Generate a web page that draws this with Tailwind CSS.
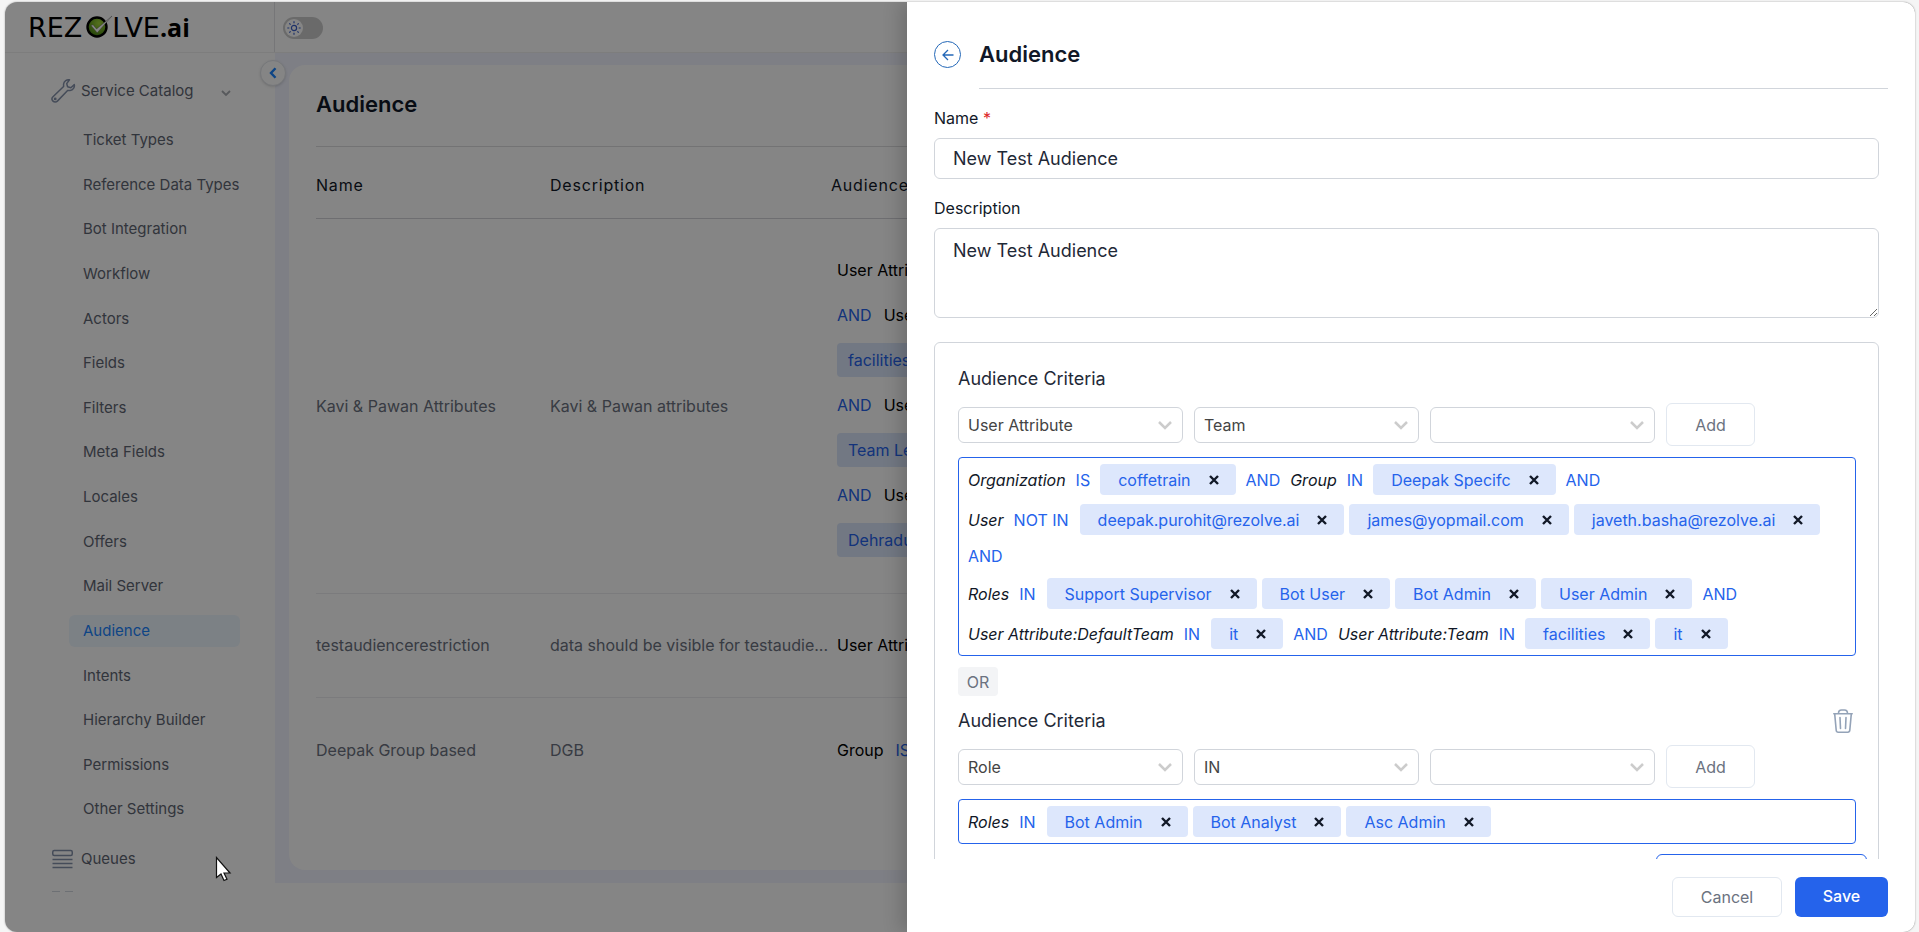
<!DOCTYPE html>
<html lang="en">
<head>
<meta charset="utf-8">
<title>Audience</title>
<script src="https://cdn.jsdelivr.net/npm/@tailwindcss/browser@4"></script>
</head>
<body class="h-screen overflow-hidden bg-[#f5f5f5] pt-[2px] pr-1 pl-[5px] font-['Inter','Liberation_Sans',sans-serif] text-base text-[#111827]">
<svg class="hidden" aria-hidden="true">
  <symbol id="x" viewBox="0 0 10 10"><path d="M1 1l8 8M9 1L1 9" stroke="currentColor" stroke-width="2.400"/></symbol>
  <symbol id="caret" viewBox="0 0 14 9"><path d="M1 1l6 6 6-6" fill="none" stroke="#ccc" stroke-width="2.500"/></symbol>
</svg>
<div class="relative h-full overflow-hidden rounded-xl bg-white shadow-[0_0_2px_rgba(0,0,0,0.35)]">

  <!-- Page behind the drawer -->
  <div class="flex h-full flex-col">
    <header class="flex h-[51px] shrink-0 border-b border-[#f0f0f0]">
      <a href="#" aria-label="REZOLVE.ai" class="flex w-[270px] shrink-0 items-center border-r border-[#e2e2e6] pl-[23px] text-black no-underline">
        <span class="flex items-center font-['DejaVu_Sans',sans-serif] text-[27px] leading-none">REZ<svg width="26" height="24" viewBox="0 0 26 24" class="mb-0.5 ml-1 overflow-visible" aria-hidden="true">
            <defs><radialGradient id="ball" cx="0.6" cy="0.3" r="0.8"><stop offset="0" stop-color="#a4d83a"/><stop offset="1" stop-color="#3c7a10"/></radialGradient></defs>
            <circle cx="11" cy="13" r="9.500" fill="url(#ball)" stroke="#000" stroke-width="2.400"/>
            <path d="M5 11.500l2-.8 3.600 4.300L26 2 11.200 18.800z" fill="#fff" stroke="#555" stroke-width=".4"/>
          </svg>LVE</span>
        <span class="font-['Open_Sans',sans-serif] text-[25px] leading-none font-bold">.ai</span>
      </a>
      <div class="flex items-center pt-px pl-2">
        <label class="flex h-[22px] w-10 items-center rounded-full bg-[#ccc] px-0.5">
          <input type="checkbox" class="sr-only" aria-label="Dark mode">
          <span class="flex size-[18px] items-center justify-center rounded-full bg-white">
            <svg width="14" height="14" viewBox="0 0 14 14" fill="none" stroke="#3b5fc9" stroke-width="1.200" aria-hidden="true"><circle cx="7" cy="7" r="2.600"/><path d="M7 .3v2M7 11.700v2M.3 7h2M11.700 7h2M2.300 2.300l1.300 1.300M10.400 10.400l1.300 1.300M2.300 11.700l1.300-1.300M10.400 3.600l1.300-1.300"/></svg>
          </span>
        </label>
      </div>
    </header>

    <div class="flex min-h-0 flex-1">
      <nav class="flex w-[270px] shrink-0 flex-col text-[15px] text-[#5f6673]">
        <button type="button" class="mt-[26px] flex h-6 items-center pl-[45px]">
          <svg width="26" height="26" viewBox="0 0 26 26" fill="none" stroke="#8592ab" stroke-width="1.500" stroke-linejoin="round" aria-hidden="true"><path d="M19.500 1.800c-2.600-.6-5.600 1.200-5.900 4.200-.1 1 .1 1.900 0 2.500L3 18.700a3.100 3.100 0 0 0 4.400 4.400L17.600 12.500c.7-.2 1.500.1 2.500 0 3-.3 4.800-3.300 4.200-5.900l-3.400 3.100-3.300-.9-.9-3.200z"/><circle cx="5.200" cy="20.900" r=".7"/></svg>
          <span class="ml-[5px]">Service Catalog</span>
          <svg class="mt-1 ml-7" width="10" height="7" viewBox="0 0 10 7" fill="none" stroke="#a8abb0" stroke-width="1.800" aria-hidden="true"><path d="M1 1l4 4 4-4"/></svg>
        </button>
        <ul class="mt-[15px] flex h-[714px] shrink-0 flex-col pr-[35px] pl-16">
          <li class="flex flex-1 items-center"><a href="#" class="w-full rounded-md px-3.5 py-1">Ticket Types</a></li>
          <li class="flex flex-1 items-center"><a href="#" class="w-full rounded-md px-3.5 py-1 whitespace-nowrap">Reference Data Types</a></li>
          <li class="flex flex-1 items-center"><a href="#" class="w-full rounded-md px-3.5 py-1">Bot Integration</a></li>
          <li class="flex flex-1 items-center"><a href="#" class="w-full rounded-md px-3.5 py-1">Workflow</a></li>
          <li class="flex flex-1 items-center"><a href="#" class="w-full rounded-md px-3.5 py-1">Actors</a></li>
          <li class="flex flex-1 items-center"><a href="#" class="w-full rounded-md px-3.5 py-1">Fields</a></li>
          <li class="flex flex-1 items-center"><a href="#" class="w-full rounded-md px-3.5 py-1">Filters</a></li>
          <li class="flex flex-1 items-center"><a href="#" class="w-full rounded-md px-3.5 py-1">Meta Fields</a></li>
          <li class="flex flex-1 items-center"><a href="#" class="w-full rounded-md px-3.5 py-1">Locales</a></li>
          <li class="flex flex-1 items-center"><a href="#" class="w-full rounded-md px-3.5 py-1">Offers</a></li>
          <li class="flex flex-1 items-center"><a href="#" class="w-full rounded-md px-3.5 py-1">Mail Server</a></li>
          <li class="flex flex-1 items-center"><a href="#" aria-current="page" class="w-full rounded-md bg-[#edf7ff] px-3.5 py-[5px] text-[#1b84ff]">Audience</a></li>
          <li class="flex flex-1 items-center"><a href="#" class="w-full rounded-md px-3.5 py-1">Intents</a></li>
          <li class="flex flex-1 items-center"><a href="#" class="w-full rounded-md px-3.5 py-1">Hierarchy Builder</a></li>
          <li class="flex flex-1 items-center"><a href="#" class="w-full rounded-md px-3.5 py-1">Permissions</a></li>
          <li class="flex flex-1 items-center"><a href="#" class="w-full rounded-md px-3.5 py-1">Other Settings</a></li>
        </ul>
        <button type="button" class="mt-[15px] flex h-6 items-center pl-[47px]">
          <svg width="21" height="20" viewBox="0 0 21 20" fill="none" stroke="#8592ab" stroke-width="1.500" aria-hidden="true"><rect x=".75" y="1.500" width="19.500" height="5" rx="1.500"/><path d="M.5 10.500h20M.5 14.500h20M.5 18.500h20"/></svg>
          <span class="ml-2">Queues</span>
        </button>
        <div class="mt-5 flex gap-[5px] pl-[47px]"><span class="h-px w-2 bg-[#d2d6de]"></span><span class="h-px w-2 bg-[#d2d6de]"></span></div>
      </nav>

      <main class="mb-[49px] min-w-0 flex-1 bg-[#f1f3ff] pt-3 pr-3.5 pb-[13px] pl-3.5">
        <section class="h-full rounded-2xl bg-white px-[27px] pt-5">
          <h1 class="flex h-[62px] items-center border-b border-[#dcdcdf] pb-[22px] text-[22px] font-semibold">Audience</h1>
          <table class="w-full table-fixed text-left">
            <colgroup><col class="w-[234px]"><col class="w-[281px]"><col></colgroup>
            <thead><tr class="h-[71px] border-b border-[#d4d4d8] tracking-wider">
              <th class="pt-1.5 font-normal" scope="col">Name</th><th class="pt-1.5 font-normal" scope="col">Description</th><th class="pt-1.5 font-normal" scope="col">Audience Criteria</th>
            </tr></thead>
            <tbody>
              <tr class="h-[375px] border-b border-[#ececf0]">
                <td class="text-[#6b7280]">Kavi &amp; Pawan Attributes</td>
                <td class="text-[#6b7280]">Kavi &amp; Pawan attributes</td>
                <td class="pb-0.5 pl-1.5">
                  <div class="flex flex-col items-start gap-[11px] whitespace-nowrap text-black">
                    <p class="flex h-[34px] items-center gap-3">User Attribute:Team <span class="text-[#2563eb]">IN</span></p>
                    <p class="flex h-[34px] items-center gap-3"><span class="text-[#2563eb]">AND</span>User Attribute:Team</p>
                    <span class="flex h-[34px] items-center rounded bg-[#dbe6fb] px-[11px] text-[#2563eb]">facilities</span>
                    <p class="flex h-[34px] items-center gap-3"><span class="text-[#2563eb]">AND</span>User Attribute:Role</p>
                    <span class="flex h-[34px] items-center rounded bg-[#dbe6fb] px-[11px] text-[#2563eb]">Team Lead</span>
                    <p class="flex h-[34px] items-center gap-3"><span class="text-[#2563eb]">AND</span>User Attribute:City</p>
                    <span class="flex h-[34px] items-center rounded bg-[#dbe6fb] px-[11px] text-[#2563eb]">Dehradun</span>
                  </div>
                </td>
              </tr>
              <tr class="h-[104px] border-b border-[#ececf0]">
                <td class="text-[#6b7280]">testaudiencerestriction</td>
                <td class="whitespace-nowrap text-[#6b7280]">data should be visible for testaudie...</td>
                <td class="pl-1.5 whitespace-nowrap text-black">User Attribute:Team</td>
              </tr>
              <tr class="h-[106px]">
                <td class="text-[#6b7280]">Deepak Group based</td>
                <td class="text-[#6b7280]">DGB</td>
                <td class="pl-1.5 whitespace-nowrap text-black"><span class="flex gap-3">Group <span class="text-[#2563eb]">IS</span></span></td>
              </tr>
            </tbody>
          </table>
        </section>
      </main>
    </div>
  </div>

  <button type="button" aria-label="Collapse menu" class="absolute top-[58px] left-[255px] flex size-[26px] items-center justify-center rounded-full border border-[#e2e5ea] bg-white shadow">
    <svg width="8" height="12" viewBox="0 0 8 12" fill="none" stroke="#1b84ff" stroke-width="2.400" aria-hidden="true"><path d="M6.500 1.200L2 6l4.500 4.800"/></svg>
  </button>

  <div class="absolute inset-0 bg-black/48"></div>

  <!-- Drawer -->
  <aside class="absolute inset-y-0 right-0 left-[902px] flex flex-col bg-white shadow-[-8px_0_16px_rgba(0,0,0,0.15)]">
    <header class="flex shrink-0 gap-[18px] pt-[39px] pr-[27px] pl-[27px]">
      <button type="button" aria-label="Back" class="flex size-[27px] items-center justify-center rounded-full border border-[#2468b8]">
        <svg width="12" height="12" viewBox="0 0 12 12" fill="none" stroke="#2468b8" stroke-width="1.300" aria-hidden="true"><path d="M11.500 6H1M6 1L1 6l5 5"/></svg>
      </button>
      <h2 class="h-12 flex-1 border-b border-[#d1d5db] text-[22px] leading-[27px] font-semibold">Audience</h2>
    </header>

    <form class="min-h-0 flex-1 overflow-hidden pt-[17px] pr-9 pl-[27px]">
      <label for="name" class="block h-8 leading-6">Name <span class="text-[#dc2626]">*</span></label>
      <input id="name" type="text" value="New Test Audience" class="block h-[41px] w-full rounded-md border border-[#d1d5db] px-[18px] text-[18px] text-[#1f2937]">
      <label for="desc" class="mt-[17px] block h-8 leading-6">Description</label>
      <textarea id="desc" class="block h-[90px] w-full resize rounded-md border border-[#d1d5db] px-[18px] py-2 text-[18px] leading-[27px] text-[#1f2937]">New Test Audience</textarea>

      <div class="mt-6 flex flex-col rounded-md border border-[#d1d5db] pr-[22px] pb-6 pl-[23px]">
        <section>
          <h3 class="mt-[21px] text-[18px] leading-[30px] text-[#1f2937]">Audience Criteria</h3>
          <div class="mt-[9px] flex items-center gap-[11px]">
            <div class="relative"><select aria-label="Criteria type" class="block h-9 w-[225px] appearance-none rounded-md border border-[#d1d5db] bg-white px-[9px] text-[#444]"><option>User Attribute</option></select><svg class="pointer-events-none absolute top-[14px] right-[11px]" width="14" height="9"><use href="#caret"/></svg></div>
            <div class="relative"><select aria-label="Attribute" class="block h-9 w-[225px] appearance-none rounded-md border border-[#d1d5db] bg-white px-[9px] text-[#444]"><option>Team</option></select><svg class="pointer-events-none absolute top-[14px] right-[11px]" width="14" height="9"><use href="#caret"/></svg></div>
            <div class="relative"><select aria-label="Value" class="block h-9 w-[225px] appearance-none rounded-md border border-[#d1d5db] bg-white px-[9px] text-[#444]"><option></option></select><svg class="pointer-events-none absolute top-[14px] right-[11px]" width="14" height="9"><use href="#caret"/></svg></div>
            <button type="button" class="h-[43px] w-[89px] rounded-md border border-[#e2e8f0] text-[#6b7280]">Add</button>
          </div>
          <div class="mt-[11px] flex flex-col gap-[9px] rounded border border-[#2563eb] py-1.5 pl-[9px] whitespace-nowrap text-[#2563eb]">
            <div class="flex items-center gap-2.5"><i class="text-[#111827]">Organization</i> IS
              <span class="flex h-[31px] items-center gap-[18px] rounded bg-[#dde7fc] pr-[17px] pl-[18px]">coffetrain<button type="button" aria-label="Remove coffetrain" class="text-[#111827]"><svg width="10" height="10"><use href="#x"/></svg></button></span>
              AND <i class="text-[#111827]">Group</i> IN
              <span class="flex h-[31px] items-center gap-[18px] rounded bg-[#dde7fc] pr-[17px] pl-[18px]">Deepak Specifc<button type="button" aria-label="Remove Deepak Specifc" class="text-[#111827]"><svg width="10" height="10"><use href="#x"/></svg></button></span>
              AND
            </div>
            <div class="flex items-center gap-2.5"><i class="text-[#111827]">User</i> NOT IN
              <div class="ml-px flex gap-[5px]">
                <span class="flex h-[31px] items-center gap-[18px] rounded bg-[#dde7fc] pr-[17px] pl-[18px]">deepak.purohit@rezolve.ai<button type="button" aria-label="Remove deepak.purohit@rezolve.ai" class="text-[#111827]"><svg width="10" height="10"><use href="#x"/></svg></button></span>
                <span class="flex h-[31px] items-center gap-[18px] rounded bg-[#dde7fc] pr-[17px] pl-[18px]">james@yopmail.com<button type="button" aria-label="Remove james@yopmail.com" class="text-[#111827]"><svg width="10" height="10"><use href="#x"/></svg></button></span>
                <span class="flex h-[31px] items-center gap-[18px] rounded bg-[#dde7fc] pr-[17px] pl-[18px]">javeth.basha@rezolve.ai<button type="button" aria-label="Remove javeth.basha@rezolve.ai" class="text-[#111827]"><svg width="10" height="10"><use href="#x"/></svg></button></span>
              </div>
            </div>
            <div class="h-[25px]">AND</div>
            <div class="flex items-center gap-2.5"><i class="text-[#111827]">Roles</i> IN
              <div class="ml-px flex gap-[5px]">
                <span class="flex h-[31px] items-center gap-[18px] rounded bg-[#dde7fc] pr-[17px] pl-[18px]">Support Supervisor<button type="button" aria-label="Remove Support Supervisor" class="text-[#111827]"><svg width="10" height="10"><use href="#x"/></svg></button></span>
                <span class="flex h-[31px] items-center gap-[18px] rounded bg-[#dde7fc] pr-[17px] pl-[18px]">Bot User<button type="button" aria-label="Remove Bot User" class="text-[#111827]"><svg width="10" height="10"><use href="#x"/></svg></button></span>
                <span class="flex h-[31px] items-center gap-[18px] rounded bg-[#dde7fc] pr-[17px] pl-[18px]">Bot Admin<button type="button" aria-label="Remove Bot Admin" class="text-[#111827]"><svg width="10" height="10"><use href="#x"/></svg></button></span>
                <span class="flex h-[31px] items-center gap-[18px] rounded bg-[#dde7fc] pr-[17px] pl-[18px]">User Admin<button type="button" aria-label="Remove User Admin" class="text-[#111827]"><svg width="10" height="10"><use href="#x"/></svg></button></span>
              </div>
              AND
            </div>
            <div class="flex items-center gap-2.5"><i class="text-[#111827]">User Attribute:DefaultTeam</i> IN
              <span class="ml-px flex h-[31px] items-center gap-[18px] rounded bg-[#dde7fc] pr-[17px] pl-[18px]">it<button type="button" aria-label="Remove it" class="text-[#111827]"><svg width="10" height="10"><use href="#x"/></svg></button></span>
              AND <i class="text-[#111827]">User Attribute:Team</i> IN
              <div class="flex gap-[5px]">
                <span class="flex h-[31px] items-center gap-[18px] rounded bg-[#dde7fc] pr-[17px] pl-[18px]">facilities<button type="button" aria-label="Remove facilities" class="text-[#111827]"><svg width="10" height="10"><use href="#x"/></svg></button></span>
                <span class="flex h-[31px] items-center gap-[18px] rounded bg-[#dde7fc] pr-[17px] pl-[18px]">it<button type="button" aria-label="Remove it" class="text-[#111827]"><svg width="10" height="10"><use href="#x"/></svg></button></span>
              </div>
            </div>
          </div>
        </section>

        <div class="mt-[11px] flex h-[29px] w-10 items-center justify-center rounded bg-[#f3f4f6] text-[#6b7280]">OR</div>

        <section class="mt-2.5">
          <div class="flex items-center justify-between pr-[3px]">
            <h3 class="text-[18px] leading-[30px] text-[#1f2937]">Audience Criteria</h3>
            <button type="button" aria-label="Delete criteria"><svg width="20" height="24" viewBox="0 0 20 24" fill="none" stroke="#94a3b8" stroke-width="1.600" stroke-linecap="round" stroke-linejoin="round" aria-hidden="true"><path d="M.8 4.700h18.400M1.700 4.900l1.500 16.300q.2 2 2 2h9.600q1.800 0 2-2l1.500-16.300M5.500 4.500q0-3.500 3-3.500h3q3 0 3 3.500M7 8.500l.5 11M13 8.500l-.5 11"/></svg></button>
          </div>
          <div class="mt-[9px] flex items-center gap-[11px]">
            <div class="relative"><select aria-label="Criteria type" class="block h-9 w-[225px] appearance-none rounded-md border border-[#d1d5db] bg-white px-[9px] text-[#444]"><option>Role</option></select><svg class="pointer-events-none absolute top-[14px] right-[11px]" width="14" height="9"><use href="#caret"/></svg></div>
            <div class="relative"><select aria-label="Operator" class="block h-9 w-[225px] appearance-none rounded-md border border-[#d1d5db] bg-white px-[9px] text-[#444]"><option>IN</option></select><svg class="pointer-events-none absolute top-[14px] right-[11px]" width="14" height="9"><use href="#caret"/></svg></div>
            <div class="relative"><select aria-label="Value" class="block h-9 w-[225px] appearance-none rounded-md border border-[#d1d5db] bg-white px-[9px] text-[#444]"><option></option></select><svg class="pointer-events-none absolute top-[14px] right-[11px]" width="14" height="9"><use href="#caret"/></svg></div>
            <button type="button" class="h-[43px] w-[89px] rounded-md border border-[#e2e8f0] text-[#6b7280]">Add</button>
          </div>
          <div class="mt-[11px] rounded border border-[#2563eb] py-1.5 pl-[9px] whitespace-nowrap text-[#2563eb]">
            <div class="flex items-center gap-2.5"><i class="text-[#111827]">Roles</i> IN
              <div class="ml-px flex gap-[5px]">
                <span class="flex h-[31px] items-center gap-[18px] rounded bg-[#dde7fc] pr-[17px] pl-[18px]">Bot Admin<button type="button" aria-label="Remove Bot Admin" class="text-[#111827]"><svg width="10" height="10"><use href="#x"/></svg></button></span>
                <span class="flex h-[31px] items-center gap-[18px] rounded bg-[#dde7fc] pr-[17px] pl-[18px]">Bot Analyst<button type="button" aria-label="Remove Bot Analyst" class="text-[#111827]"><svg width="10" height="10"><use href="#x"/></svg></button></span>
                <span class="flex h-[31px] items-center gap-[18px] rounded bg-[#dde7fc] pr-[17px] pl-[18px]">Asc Admin<button type="button" aria-label="Remove Asc Admin" class="text-[#111827]"><svg width="10" height="10"><use href="#x"/></svg></button></span>
              </div>
            </div>
          </div>
        </section>
        <button type="button" aria-label="Add criteria group" class="mt-2.5 -mr-[11px] h-[43px] w-[211px] self-end rounded-md border border-[#2563eb]"></button>
      </div>
    </form>

    <footer class="flex h-[73px] shrink-0 justify-end gap-[13px] pt-[18px] pr-[27px]">
      <button type="button" class="h-10 w-[110px] rounded-md border border-[#e2e8f0] text-[#6b7280]">Cancel</button>
      <button type="submit" class="h-10 w-[93px] rounded-md bg-[#2563eb] pb-0.5 font-medium text-white">Save</button>
    </footer>
  </aside>

  <!-- Pointer -->
  <svg class="absolute top-[854px] left-[210px]" width="17" height="26" viewBox="0 0 17 26" aria-hidden="true"><path d="M1.500 1.500v20l4.500-3.500 3 6.500 3-1.300-3-6.200h6z" fill="#fff" stroke="#111" stroke-width="1.200"/></svg>
</div>
</body>
</html>
